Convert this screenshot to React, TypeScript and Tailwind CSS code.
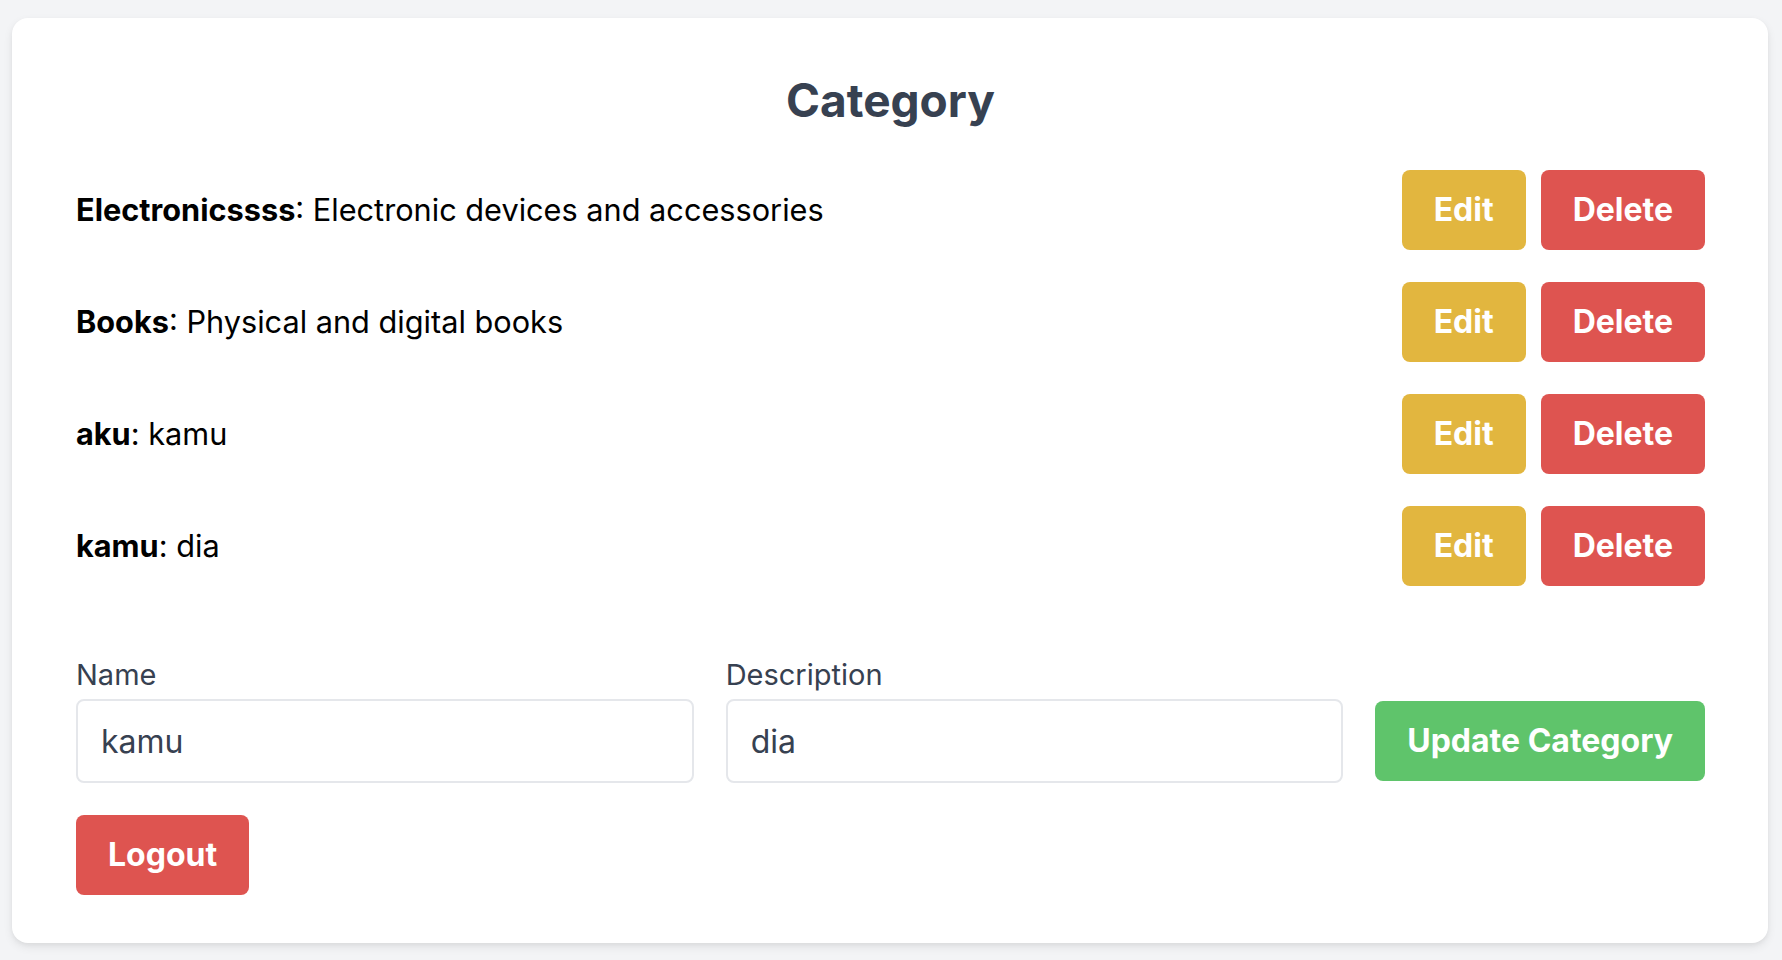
import React, { useState } from 'react';

type Category = { id: number; name: string; description: string };

const initialCategories: Category[] = [
  { id: 1, name: 'Electronicssss', description: 'Electronic devices and accessories' },
  { id: 2, name: 'Books', description: 'Physical and digital books' },
  { id: 3, name: 'aku', description: 'kamu' },
  { id: 4, name: 'kamu', description: 'dia' },
];

export default function App() {
  const [categories, setCategories] = useState<Category[]>(initialCategories);
  const [name, setName] = useState('kamu');
  const [description, setDescription] = useState('dia');

  const btn = 'h-[80px] px-[32px] rounded-[8px] text-white font-bold text-[32px] leading-[48px]';

  return (
    <div className="min-h-screen bg-[#f3f4f6] pt-[18px] pb-[18px] pl-[12px] pr-[14px] font-['Inter','Noto_Sans',sans-serif]">
      <div className="bg-white rounded-[16px] shadow-[0_4px_10px_rgba(0,0,0,0.08),0_2px_4px_rgba(0,0,0,0.04)] pt-[50px] pb-[48px] pl-[64px] pr-[63px]">
        <h1 className="text-center text-[46px] leading-[64px] font-bold text-[#374151] mb-[38px]">Category</h1>

        {/* List */}
        <div>
          {categories.map((c) => (
            <div key={c.id} className="flex items-center justify-between mb-[32px]">
              <div className="text-[30.7px] text-black">
                <span className="font-bold">{c.name}</span>: {c.description}
              </div>
              <div className="flex gap-[15px]">
                <button
                  className={`${btn} bg-[#e2b63f]`}
                  onClick={() => {
                    setName(c.name);
                    setDescription(c.description);
                  }}
                >
                  Edit
                </button>
                <button
                  className={`${btn} bg-[#de5450]`}
                  onClick={() => setCategories(categories.filter((x) => x.id !== c.id))}
                >
                  Delete
                </button>
              </div>
            </div>
          ))}
        </div>

        {/* Form */}
        <div className="flex items-end gap-[32px] pt-[37px]">
          <div className="flex-1">
            <label className="block text-[29px] leading-[40px] text-[#374151] mb-[4px]">Name</label>
            <input
              value={name}
              onChange={(e) => setName(e.target.value)}
              className="w-full h-[84px] px-[23px] border-2 border-[#e5e7eb] rounded-[8px] text-[32px] text-[#374151] outline-none"
            />
          </div>
          <div className="flex-1">
            <label className="block text-[29px] leading-[40px] text-[#374151] mb-[4px]">Description</label>
            <input
              value={description}
              onChange={(e) => setDescription(e.target.value)}
              className="w-full h-[84px] px-[23px] border-2 border-[#e5e7eb] rounded-[8px] text-[32px] text-[#374151] outline-none"
            />
          </div>
          <button className={`${btn} bg-[#5fc46b] mb-[2px]`}>Update Category</button>
        </div>

        <button className={`${btn} bg-[#de5450] mt-[32px]`}>Logout</button>
      </div>
    </div>
  );
}
